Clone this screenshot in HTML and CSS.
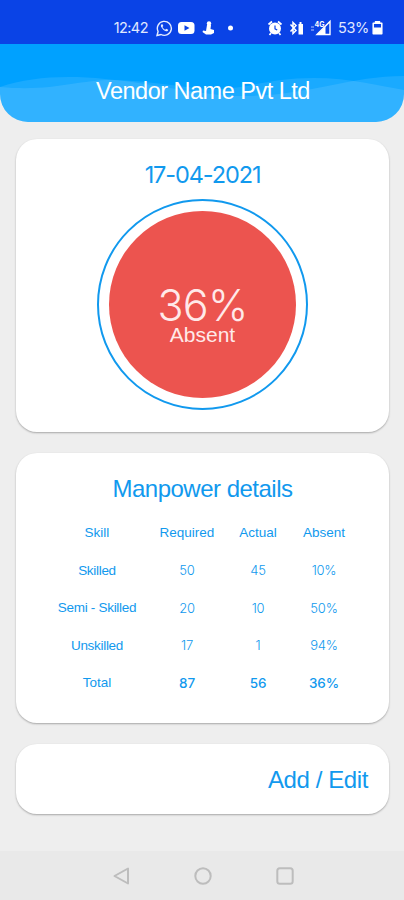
FILE: index.html
```html
<!DOCTYPE html>
<html lang="en">

  <head>
    <meta charset="utf-8">
    <title>Vendor Name Pvt Ltd</title>
    <link rel="stylesheet" href="styles.css">
  </head>

  <body>

    <div class="status-bar">
      <span class="clock">12:42</span>
      <svg class="status-left" width="84" height="18" viewBox="0 0 84 18">
        <path d="M1 16.500l1.100-4A7 7 0 1 1 5 15.500z" fill="none" stroke="#e5ecff" stroke-width="1.4"/>
        <path d="M5.600 5.200c-1 .8-1 2 0 3.400 1.200 1.900 2.700 3.300 4.500 3.700 1.200.1 2-.6 2.100-1.600l-2-1-1 1c-1.300-.5-2.200-1.400-2.800-2.600l.9-1-.8-1.900z" fill="#e5ecff"/>
        <rect x="22" y="3" width="16.500" height="12" rx="3.500" fill="#fff"/>
        <path d="M28.500 6.200v5.600l5-2.800z" fill="#0a43e6"/>
        <circle cx="53" cy="4.500" r="2.200" fill="#fff"/>
        <path d="M51 6h4l-.5 4 3.500 1v3l-3 1.500h-5L46.500 13l.5-1.500 3 .5z" fill="#fff"/>
        <circle cx="74.500" cy="9" r="2.500" fill="#fff"/>
      </svg>
      <svg class="status-right" width="66" height="18" viewBox="0 0 66 18">
        <circle cx="8" cy="9.500" r="6" fill="#fff"/>
        <path d="M1.500 5.500l3.500-3M14.500 5.500l-3.500-3M4 14l-1.500 2M12 14l1.500 2" stroke="#fff" stroke-width="1.700"/>
        <path d="M8 6.500v3.300l2.200 1.300" fill="none" stroke="#0a43e6" stroke-width="1.200"/>
        <path d="M23.500 5.500l5.500 6-3 3V3.500l3 3-5.500 6" fill="none" stroke="#fff" stroke-width="1.500"/>
        <path d="M31.500 5h1V3h2v2h1.500v10.500h-4.500z" fill="#fff"/>
        <path d="M44 8h3M44 11h3" stroke="#b9caff"/>
        <path d="M50 15.500L63 2.500v13z" fill="none" stroke="#fff" stroke-width="1.400"/>
        <path d="M50 15.500l8.500-8v8z" fill="#fff"/>
        <text x="47.500" y="7.500" class="network">4G</text>
      </svg>
      <span class="battery-level">53%</span>
      <svg class="battery" width="11" height="14" viewBox="0 0 11 14">
        <path d="M3.500 2V.7h4V2M1.200 2.200h8.600v10.600H1.200z" fill="none" stroke="#fff" stroke-width="1.500" stroke-linejoin="round"/>
        <path d="M1.500 6.500h8v6h-8z" fill="#fff"/>
      </svg>
    </div>

    <header class="header">
      <svg class="waves" width="404" height="78" viewBox="0 0 404 78">
        <path d="M0 43C30 33 65 31 105 35C160 40 205 53 248 52C310 51 350 32 404 32V78H0z" fill="#fff" fill-opacity=".1"/>
        <path d="M0 43C55 48 78 35 117 36C165 38 190 46 224 45C255 42 275 34 314 34C350 34 380 42 404 46V78H0z" fill="#fff" fill-opacity=".1"/>
      </svg>
      <h1>Vendor Name Pvt Ltd</h1>
    </header>

    <main class="content">

      <section class="card summary">
        <h2 class="date">17-04-2021</h2>
        <div class="ring">
          <div class="disc">
            <div class="percent">36%</div>
            <div class="caption">Absent</div>
          </div>
        </div>
      </section>

      <section class="card manpower">
        <h2>Manpower details</h2>
        <table>
          <tr><th class="skill">Skill</th><th class="required">Required</th><th>Actual</th><th>Absent</th></tr>
          <tr><th>Skilled</th><td>50</td><td>45</td><td>10%</td></tr>
          <tr><th>Semi - Skilled</th><td>20</td><td>10</td><td>50%</td></tr>
          <tr><th>Unskilled</th><td>17</td><td>1</td><td>94%</td></tr>
          <tr class="total"><th>Total</th><td>87</td><td>56</td><td>36%</td></tr>
        </table>
      </section>

      <section class="card actions">
        <a class="edit">Add / Edit</a>
      </section>

    </main>

    <nav class="nav-bar">
      <svg width="18" height="18" viewBox="0 0 18 18"><path d="M16 1.500v15L2.500 9z"/></svg>
      <svg width="18" height="18" viewBox="0 0 18 18"><circle cx="9" cy="9" r="7.700"/></svg>
      <svg width="18" height="18" viewBox="0 0 18 18"><rect x="1.300" y="1.300" width="15.400" height="15.400" rx="2.500"/></svg>
    </nav>

  </body>

</html>
```
FILE: styles.css
```css
* {
    box-sizing: border-box;
}

body {
    margin: 0;
    height: 900px;
    display: flex;
    flex-direction: column;
    overflow: hidden;
    font-family: "Liberation Sans", Arial, sans-serif;
    color: #1199ee;
    background-color: #eeeeee;
}

h1, h2 {
    margin: 0;
    font-weight: normal;
    white-space: nowrap;
}

.status-bar {
    height: 44px;
    padding: 11px 21px 0 0;
    display: flex;
    align-items: center;
    justify-content: flex-end;
    color: #e0e9ff;
    background-color: #0a43e6;
    font-family: Inter, sans-serif;
    font-size: 14.5px;
}

.clock {
    letter-spacing: -0.6px;
}

.status-left {
    margin: 0 27px 0 8px;
}

.status-right {
    margin-right: 5px;
}

.network {
    font-size: 7px;
    font-weight: bold;
    fill: #ffffff;
}

.battery-level {
    letter-spacing: -0.3px;
}

.battery {
    margin-left: 3px;
}

.header {
    position: relative;
    height: 78px;
    padding-top: 33px;
    overflow: hidden;
    border-radius: 0 0 28px 28px;
    background-color: #00a1ff;
    text-align: center;
}

.waves {
    position: absolute;
    top: 0;
    left: 0;
}

.header h1 {
    position: relative;
    padding-left: 2px;
    color: #ffffff;
    font-size: 23.5px;
    line-height: 28px;
    letter-spacing: -0.5px;
}

.content {
    flex: 1;
    display: flex;
    flex-direction: column;
    gap: 21px;
    padding: 17px 15px 0 16px;
}

.card {
    border-radius: 21px;
    background-color: #ffffff;
    box-shadow: 0 1px 2px rgba(0, 0, 0, 0.3);
}

.summary {
    height: 293px;
    padding-top: 22px;
    display: flex;
    flex-direction: column;
    align-items: center;
}

.date {
    font-family: Inter, sans-serif;
    font-size: 23.5px;
    line-height: 28px;
    letter-spacing: -1.1px;
}

.ring {
    width: 211px;
    height: 211px;
    margin-top: 10px;
    padding: 10px;
    border: 2px solid #1199ee;
    border-radius: 50%;
}

.disc {
    height: 187px;
    padding-top: 75px;
    border-radius: 50%;
    background-color: #ec544f;
    color: #ffe9e9;
    text-align: center;
}

.percent {
    font-family: Inter, sans-serif;
    font-size: 43px;
    font-weight: 300;
    line-height: 38px;
    letter-spacing: -0.8px;
}

.caption {
    font-size: 21px;
    line-height: 21px;
}

.manpower {
    height: 270px;
    padding-top: 22px;
}

.manpower h2 {
    font-size: 24px;
    line-height: 28px;
    letter-spacing: -0.5px;
    text-align: center;
}

table {
    width: 312px;
    margin: 11px 0 0 29px;
    table-layout: fixed;
    border-collapse: collapse;
    font-size: 13.5px;
    letter-spacing: -0.2px;
}

th, td {
    height: 37.5px;
    padding: 0;
    font-weight: normal;
    text-align: center;
    white-space: nowrap;
}

th {
    letter-spacing: -0.3px;
}

td {
    font-family: Inter, sans-serif;
    font-size: 13px;
    font-weight: 300;
}

tr:first-child th, .total th {
    letter-spacing: 0;
}

.skill {
    width: 104px;
}

.required {
    width: 76px;
}

.total td {
    font-size: 13.5px;
    font-weight: 500;
}

.actions {
    height: 70px;
    padding: 1px 21px 0 0;
    display: flex;
    align-items: center;
    justify-content: flex-end;
}

.edit {
    font-size: 24px;
    letter-spacing: -0.4px;
}

.nav-bar {
    height: 49px;
    padding-left: 1px;
    display: flex;
    align-items: center;
    justify-content: center;
    gap: 64px;
    background-color: #e9e9e9;
}

.nav-bar svg {
    fill: none;
    stroke: #bdbdbd;
    stroke-width: 2;
    stroke-linejoin: round;
}
```
